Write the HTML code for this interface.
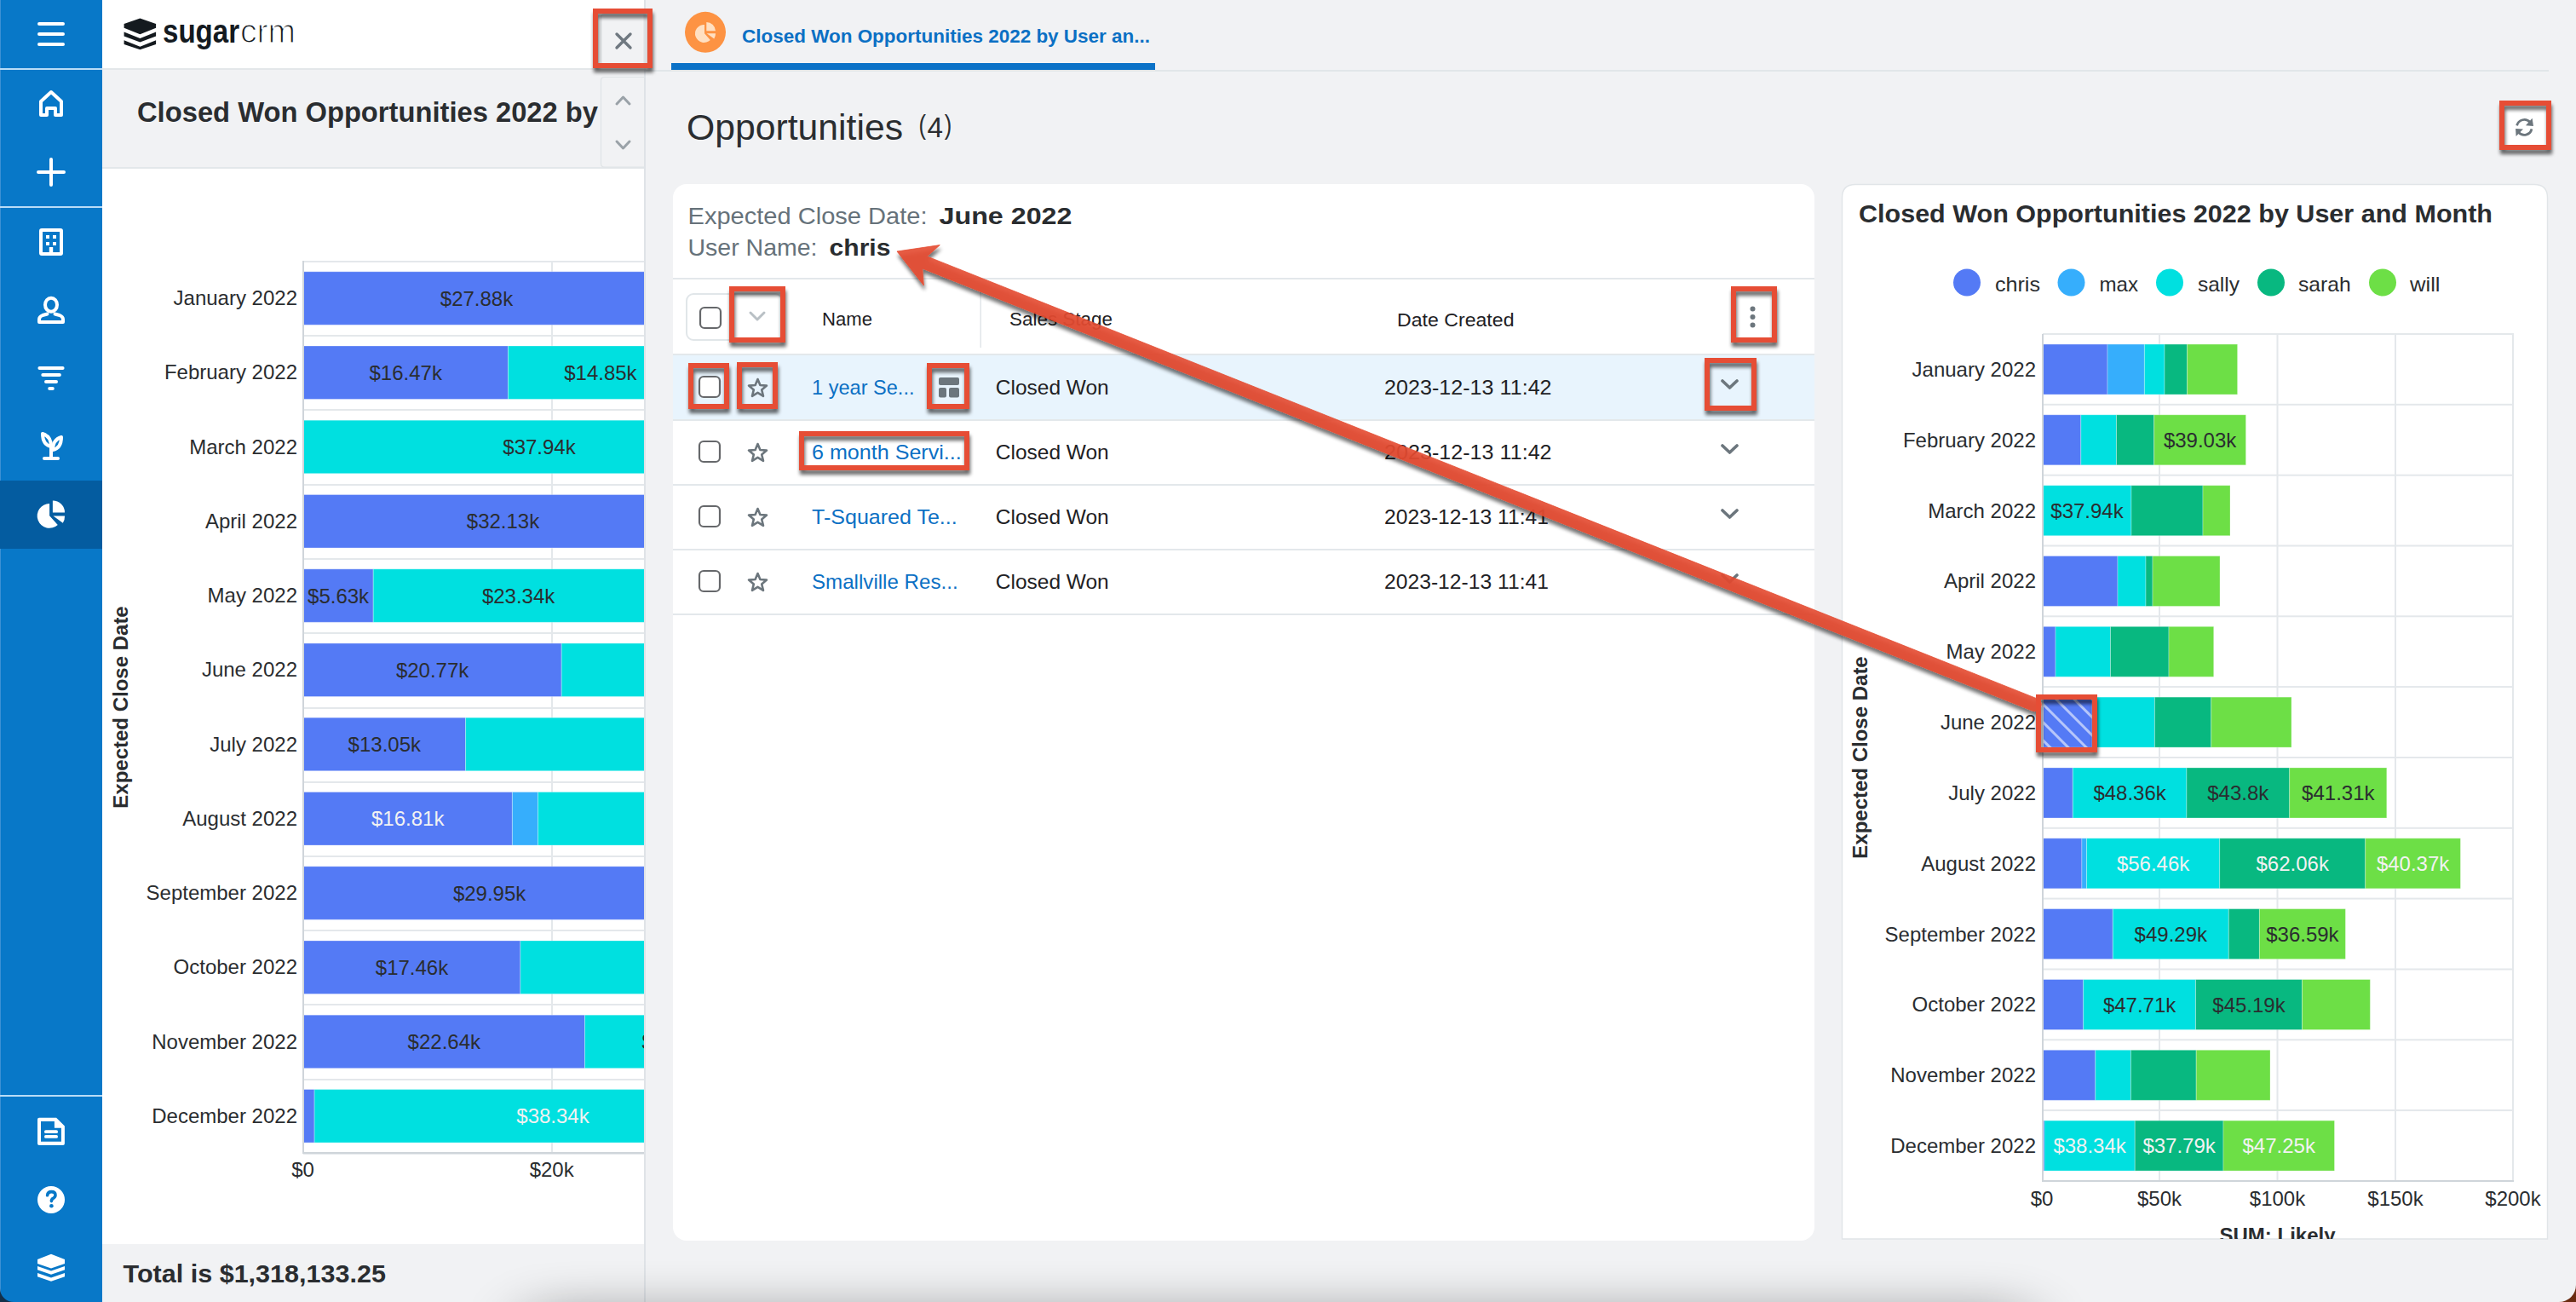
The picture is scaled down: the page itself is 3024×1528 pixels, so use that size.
<!DOCTYPE html>
<html><head><meta charset="utf-8"><title>SugarCRM</title>
<style>html,body{margin:0;padding:0;width:3024px;height:1528px;overflow:hidden;background:#f1f2f4;font-family:"Liberation Sans", sans-serif;}svg{display:block}</style>
</head><body>
<svg width="3024" height="1528" viewBox="0 0 3024 1528" font-family='"Liberation Sans", sans-serif'><rect x="0" y="0" width="3024" height="1528" fill="#f1f2f4" />
<rect x="120" y="0" width="636" height="80" fill="#ffffff" />
<rect x="120" y="80" width="636" height="2" fill="#e3e7ea" />
<rect x="120" y="82" width="636" height="114" fill="#f1f2f4" />
<rect x="120" y="196" width="636" height="2" fill="#e3e7ea" />
<rect x="120" y="198" width="636" height="1262" fill="#ffffff" />
<rect x="120" y="1460" width="636" height="68" fill="#f1f2f4" />
<rect x="756" y="0" width="2" height="1528" fill="#dfe3e7" />
<path d="M756 90.5 H709.5 Q705.5 90.5 705.5 94.5 V192 Q705.5 196 709.5 196 H756" fill="none" stroke="#dfe3e6" stroke-width="1.2"/>
<path d="M756 16.5 H709.5 Q705.5 16.5 705.5 20.5 V72 Q705.5 76 709.5 76 H756 Z" fill="#f1f2f4" stroke="#dfe3e6" stroke-width="1.2"/>
<text x="161" y="143" font-size="34" fill="#2a2d30" font-weight="bold" text-anchor="start" textLength="541" lengthAdjust="spacingAndGlyphs" >Closed Won Opportunities 2022 by</text>
<path d="M724 122 L731.5 114 L739 122" fill="none" stroke="#9aa2a8" stroke-width="3" stroke-linecap="round" stroke-linejoin="round"/>
<path d="M724 166 L731.5 174 L739 166" fill="none" stroke="#9aa2a8" stroke-width="3" stroke-linecap="round" stroke-linejoin="round"/>
<path d="M724 40 L740 56 M740 40 L724 56" stroke="#6f7880" stroke-width="3.4" stroke-linecap="round"/>
<g fill="#141a1f"><path d="M164.4 21.5 L183.1 28.1 V32.75 L164.4 40.25 L145.6 32.75 V28.1 Z"/><path d="M145.6 37.5 L164.4 45 L183.1 37.5 V42.5 L164.4 49.5 L145.6 42.5 Z"/><path d="M145.6 47.25 L164.4 54.75 L183.1 47.25 V52 L164.4 58.25 L145.6 52 Z"/></g>
<text x="191" y="50" font-size="38" fill="#141a1f" font-weight="bold" text-anchor="start" textLength="90" lengthAdjust="spacingAndGlyphs" >sugar</text>
<text x="282" y="50" font-size="38" fill="#141a1f" font-weight="normal" text-anchor="start" textLength="65" lengthAdjust="spacingAndGlyphs" stroke="#fff" stroke-width="1.2">crm</text>
<text x="144.5" y="1504.5" font-size="30" fill="#2a2d30" font-weight="bold" text-anchor="start" textLength="308.5" lengthAdjust="spacingAndGlyphs" >Total is $1,318,133.25</text>
<defs><clipPath id="lclip"><rect x="120" y="198" width="636" height="1262"/></clipPath><clipPath id="rclip"><rect x="2162" y="216" width="829" height="1238"/></clipPath><pattern id="hatch" patternUnits="userSpaceOnUse" width="15" height="15" patternTransform="rotate(-45)"><rect width="15" height="15" fill="#547af5"/><rect x="0" y="0" width="3" height="15" fill="#d6defc" opacity="0.75"/></pattern><filter id="ds" x="-20%" y="-20%" width="140%" height="150%"><feGaussianBlur in="SourceAlpha" stdDeviation="2"/><feOffset dx="1" dy="4.5" result="o"/><feComponentTransfer><feFuncA type="linear" slope="0.6"/></feComponentTransfer><feMerge><feMergeNode/><feMergeNode in="SourceGraphic"/></feMerge></filter></defs>
<g clip-path="url(#lclip)">
<rect x="356" y="306" width="400" height="2" fill="#e4e8eb" />
<rect x="356" y="393" width="400" height="2" fill="#e4e8eb" />
<rect x="356" y="480" width="400" height="2" fill="#e4e8eb" />
<rect x="356" y="568" width="400" height="2" fill="#e4e8eb" />
<rect x="356" y="655" width="400" height="2" fill="#e4e8eb" />
<rect x="356" y="742" width="400" height="2" fill="#e4e8eb" />
<rect x="356" y="830" width="400" height="2" fill="#e4e8eb" />
<rect x="356" y="917" width="400" height="2" fill="#e4e8eb" />
<rect x="356" y="1004" width="400" height="2" fill="#e4e8eb" />
<rect x="356" y="1091" width="400" height="2" fill="#e4e8eb" />
<rect x="356" y="1178" width="400" height="2" fill="#e4e8eb" />
<rect x="356" y="1266" width="400" height="2" fill="#e4e8eb" />
<rect x="356" y="1353" width="400" height="2" fill="#e4e8eb" />
<rect x="647" y="306" width="2" height="1047" fill="#e4e8eb" />
<rect x="356" y="318.8" width="407.0" height="62.5" fill="#547af5" stroke="#ffffff" stroke-opacity="0.3" stroke-width="1"/>
<text x="559.5" y="358.5" font-size="24" fill="#2a2d30" font-weight="normal" text-anchor="middle" >$27.88k</text>
<text x="349" y="358.1" font-size="24" fill="#2a2d30" font-weight="normal" text-anchor="end" >January 2022</text>
<rect x="356" y="406.0" width="240.5" height="62.5" fill="#547af5" stroke="#ffffff" stroke-opacity="0.3" stroke-width="1"/>
<text x="476.2" y="445.8" font-size="24" fill="#2a2d30" font-weight="normal" text-anchor="middle" >$16.47k</text>
<rect x="596.5" y="406.0" width="216.8" height="62.5" fill="#00e0e0" stroke="#ffffff" stroke-opacity="0.3" stroke-width="1"/>
<text x="704.9" y="445.8" font-size="24" fill="#2a2d30" font-weight="normal" text-anchor="middle" >$14.85k</text>
<text x="349" y="445.4" font-size="24" fill="#2a2d30" font-weight="normal" text-anchor="end" >February 2022</text>
<rect x="356" y="493.2" width="553.9" height="62.5" fill="#00e0e0" stroke="#ffffff" stroke-opacity="0.3" stroke-width="1"/>
<text x="633.0" y="533.0" font-size="24" fill="#2a2d30" font-weight="normal" text-anchor="middle" >$37.94k</text>
<text x="349" y="532.6" font-size="24" fill="#2a2d30" font-weight="normal" text-anchor="end" >March 2022</text>
<rect x="356" y="580.5" width="469.1" height="62.5" fill="#547af5" stroke="#ffffff" stroke-opacity="0.3" stroke-width="1"/>
<text x="590.5" y="620.2" font-size="24" fill="#2a2d30" font-weight="normal" text-anchor="middle" >$32.13k</text>
<text x="349" y="619.9" font-size="24" fill="#2a2d30" font-weight="normal" text-anchor="end" >April 2022</text>
<rect x="356" y="667.8" width="82.2" height="62.5" fill="#547af5" stroke="#ffffff" stroke-opacity="0.3" stroke-width="1"/>
<text x="397.1" y="707.5" font-size="24" fill="#2a2d30" font-weight="normal" text-anchor="middle" >$5.63k</text>
<rect x="438.2" y="667.8" width="340.8" height="62.5" fill="#00e0e0" stroke="#ffffff" stroke-opacity="0.3" stroke-width="1"/>
<text x="608.6" y="707.5" font-size="24" fill="#2a2d30" font-weight="normal" text-anchor="middle" >$23.34k</text>
<text x="349" y="707.1" font-size="24" fill="#2a2d30" font-weight="normal" text-anchor="end" >May 2022</text>
<rect x="356" y="755.0" width="303.2" height="62.5" fill="#547af5" stroke="#ffffff" stroke-opacity="0.3" stroke-width="1"/>
<text x="507.6" y="794.8" font-size="24" fill="#2a2d30" font-weight="normal" text-anchor="middle" >$20.77k</text>
<rect x="659.2" y="755.0" width="438.0" height="62.5" fill="#00e0e0" stroke="#ffffff" stroke-opacity="0.3" stroke-width="1"/>
<text x="349" y="794.4" font-size="24" fill="#2a2d30" font-weight="normal" text-anchor="end" >June 2022</text>
<rect x="356" y="842.2" width="190.5" height="62.5" fill="#547af5" stroke="#ffffff" stroke-opacity="0.3" stroke-width="1"/>
<text x="451.3" y="882.0" font-size="24" fill="#2a2d30" font-weight="normal" text-anchor="middle" >$13.05k</text>
<rect x="546.5" y="842.2" width="438.0" height="62.5" fill="#00e0e0" stroke="#ffffff" stroke-opacity="0.3" stroke-width="1"/>
<text x="349" y="881.6" font-size="24" fill="#2a2d30" font-weight="normal" text-anchor="end" >July 2022</text>
<rect x="356" y="929.5" width="245.4" height="62.5" fill="#547af5" stroke="#ffffff" stroke-opacity="0.3" stroke-width="1"/>
<text x="478.7" y="969.2" font-size="24" fill="#f2f2f2" font-weight="normal" text-anchor="middle" >$16.81k</text>
<rect x="601.4" y="929.5" width="30.1" height="62.5" fill="#36aefc" stroke="#ffffff" stroke-opacity="0.3" stroke-width="1"/>
<rect x="631.5" y="929.5" width="438.0" height="62.5" fill="#00e0e0" stroke="#ffffff" stroke-opacity="0.3" stroke-width="1"/>
<text x="349" y="968.9" font-size="24" fill="#2a2d30" font-weight="normal" text-anchor="end" >August 2022</text>
<rect x="356" y="1016.8" width="437.3" height="62.5" fill="#547af5" stroke="#ffffff" stroke-opacity="0.3" stroke-width="1"/>
<text x="574.6" y="1056.5" font-size="24" fill="#2a2d30" font-weight="normal" text-anchor="middle" >$29.95k</text>
<text x="349" y="1056.1" font-size="24" fill="#2a2d30" font-weight="normal" text-anchor="end" >September 2022</text>
<rect x="356" y="1104.0" width="254.9" height="62.5" fill="#547af5" stroke="#ffffff" stroke-opacity="0.3" stroke-width="1"/>
<text x="483.5" y="1143.8" font-size="24" fill="#2a2d30" font-weight="normal" text-anchor="middle" >$17.46k</text>
<rect x="610.9" y="1104.0" width="438.0" height="62.5" fill="#00e0e0" stroke="#ffffff" stroke-opacity="0.3" stroke-width="1"/>
<text x="349" y="1143.4" font-size="24" fill="#2a2d30" font-weight="normal" text-anchor="end" >October 2022</text>
<rect x="356" y="1191.2" width="330.5" height="62.5" fill="#547af5" stroke="#ffffff" stroke-opacity="0.3" stroke-width="1"/>
<text x="521.3" y="1231.0" font-size="24" fill="#2a2d30" font-weight="normal" text-anchor="middle" >$22.64k</text>
<rect x="686.5" y="1191.2" width="219.6" height="62.5" fill="#00e0e0" stroke="#ffffff" stroke-opacity="0.3" stroke-width="1"/>
<text x="796.3" y="1231.0" font-size="24" fill="#2a2d30" font-weight="normal" text-anchor="middle" >$15.04k</text>
<text x="349" y="1230.6" font-size="24" fill="#2a2d30" font-weight="normal" text-anchor="end" >November 2022</text>
<rect x="356" y="1278.5" width="13.1" height="62.5" fill="#547af5" stroke="#ffffff" stroke-opacity="0.3" stroke-width="1"/>
<rect x="369.1" y="1278.5" width="559.8" height="62.5" fill="#00e0e0" stroke="#ffffff" stroke-opacity="0.3" stroke-width="1"/>
<text x="649.0" y="1318.2" font-size="24" fill="#f2f2f2" font-weight="normal" text-anchor="middle" >$38.34k</text>
<text x="349" y="1317.9" font-size="24" fill="#2a2d30" font-weight="normal" text-anchor="end" >December 2022</text>
</g>
<rect x="355" y="306" width="2" height="1048" fill="#cfd5da" />
<rect x="355" y="1352" width="401" height="2" fill="#cfd5da" />
<text x="355.5" y="1381" font-size="24" fill="#2a2d30" font-weight="normal" text-anchor="middle" >$0</text>
<text x="647.7" y="1381" font-size="24" fill="#2a2d30" font-weight="normal" text-anchor="middle" >$20k</text>
<text x="0" y="0" font-size="24" fill="#2a2d30" font-weight="bold" text-anchor="middle" transform="translate(150 830) rotate(-90)">Expected Close Date</text>
<rect x="0" y="0" width="120" height="1528" fill="#0878c8" />
<rect x="0" y="0" width="1" height="1528" fill="#3d90d4" />
<rect x="0" y="80" width="120" height="2" fill="#b9dcf7" />
<rect x="0" y="242" width="120" height="2" fill="#b9dcf7" />
<rect x="0" y="1285" width="120" height="2" fill="#b9dcf7" />
<rect x="0" y="564" width="120" height="80" fill="#045ca0" />
<g stroke="#fff" stroke-width="4" stroke-linecap="round"><path d="M46 28 H74 M46 40 H74 M46 52 H74"/></g>
<path d="M48 135 V119 L60 108 L72 119 V135 H65 V127 H55 V135 Z" fill="none" stroke="#fff" stroke-width="4" stroke-linejoin="round"/>
<path d="M60 187 V217 M45 202 H75" stroke="#fff" stroke-width="4" stroke-linecap="round"/>
<g fill="#fff"><path d="M49 268 H71 Q74 268 74 271 V297 Q74 300 71 300 H49 Q46 300 46 297 V271 Q46 268 49 268 Z M50 272 V296 H57.8 V290 H62.2 V296 H70 V272 Z" fill-rule="evenodd"/><rect x="54" y="276" width="4" height="4"/><rect x="62" y="276" width="4" height="4"/><rect x="54" y="284" width="4" height="4"/><rect x="62" y="284" width="4" height="4"/></g>
<g fill="none" stroke="#fff" stroke-width="4" stroke-linecap="round" stroke-linejoin="round"><ellipse cx="60" cy="357.7" rx="7" ry="8"/><path d="M55.5 368.5 L50 370 Q46 371.5 46 375 V378 H74 V375 Q74 371.5 70 370 L64.5 368.5"/></g>
<g stroke="#fff" stroke-width="4" stroke-linecap="round"><path d="M46.4 432 H73.6 M50.3 440 H69.9 M54 448 H66 M58.2 456 H61.8"/></g>
<g fill="none" stroke="#fff" stroke-width="4" stroke-linecap="round" stroke-linejoin="round"><path d="M60 538 V524"/><path d="M52 538 H68"/><path d="M50 509 Q50 522 60 524 Q60 512 50 509 Z"/><path d="M72 513 Q72 526 62 528 Q62 516 72 513 Z"/></g>
<g fill="#fff"><path d="M58.1 591 V605.3 L67.8 616 A14.4 14.4 0 1 1 58.1 591 Z"/><path d="M61.9 587.5 V601.5 H76 A14.1 14.1 0 0 0 61.9 587.5 Z"/><path d="M62.5 605.6 H76 A13.5 13.5 0 0 1 73.8 613.8 Z"/></g>
<g fill="#fff"><path d="M46 1311.8 H66.1 L75.9 1321.6 V1342 Q75.9 1344 73.9 1344 H46 Q44 1344 44 1342 V1313.8 Q44 1311.8 46 1311.8 Z M48 1316.1 V1339.8 H71.9 V1323.8 H63.9 V1316.1 Z" fill-rule="evenodd"/><rect x="52" y="1326.3" width="16" height="3.7" rx="1.85"/><rect x="52" y="1332.1" width="16" height="3.7" rx="1.85"/></g>
<circle cx="60" cy="1408" r="16" fill="#fff"/><path d="M55.6 1402.8 Q56 1398.6 60.4 1398.6 Q65 1398.6 65 1402.6 Q65 1405 62.4 1406.4 Q60.4 1407.4 60.4 1409.6" fill="none" stroke="#0878c8" stroke-width="3.6" stroke-linecap="round" stroke-linejoin="round"/><circle cx="60.4" cy="1415.2" r="2.3" fill="#0878c8"/>
<g fill="#fff"><path d="M60 1471.8 L76 1478 V1482.9 L60 1488.4 L44 1482.9 V1478 Z"/><path d="M44 1486 L60 1491.5 L76 1486 V1490.2 L60 1495.8 L44 1490.2 Z"/><path d="M44 1494 L60 1499.5 L76 1494 V1498.2 L60 1503.7 L44 1498.2 Z"/></g>
<path d="M0 1512 V1528 H16 A16 16 0 0 1 0 1512 Z" fill="#13304a"/>
<rect x="758" y="82" width="2234" height="2" fill="#e1e6e9" />
<circle cx="828" cy="37.85" r="24" fill="#fd9343"/>
<g fill="#ffe0c2"><path d="M827 28.9 V39.25 L833.8 46.9 A10.5 10.5 0 1 1 827 28.9 Z"/><path d="M829.3 25.9 V36.2 H840 A10.7 10.7 0 0 0 829.3 25.9 Z"/><path d="M829.7 39.3 H840 A10.5 10.5 0 0 1 838.3 45.4 Z"/></g>
<text x="871" y="50" font-size="22" fill="#0b70c4" font-weight="bold" text-anchor="start" textLength="479" lengthAdjust="spacingAndGlyphs" >Closed Won Opportunities 2022 by User an...</text>
<rect x="788" y="74" width="568" height="8" fill="#0b72c7" />
<text x="806" y="163.8" font-size="42" fill="#2a2d30" font-weight="normal" text-anchor="start" textLength="254" lengthAdjust="spacingAndGlyphs" >Opportunities</text>
<text x="1078.5" y="157.3" font-size="31" fill="#2a2d30" font-weight="normal" text-anchor="start" textLength="8.5" lengthAdjust="spacingAndGlyphs" >(</text>
<text x="1088.5" y="161.2" font-size="33" fill="#2a2d30" font-weight="normal" text-anchor="start" textLength="18.5" lengthAdjust="spacingAndGlyphs" >4</text>
<text x="1108.8" y="157.3" font-size="31" fill="#2a2d30" font-weight="normal" text-anchor="start" textLength="8.5" lengthAdjust="spacingAndGlyphs" >)</text>
<rect x="2940" y="124" width="50" height="46" fill="#ffffff" />
<g fill="none" stroke="#6c767d" stroke-width="2.8"><path d="M2954.6 147.4 A8.9 8.9 0 0 1 2970.1 143.7"/><path d="M2972 151.4 A8.9 8.9 0 0 1 2956.5 155.1"/></g>
<g fill="#6c767d"><path d="M2972.6 138.8 L2974 148 L2965 147.3 Z"/><path d="M2953.1 151 L2962 151.5 L2953.6 160 Z"/></g>
<rect x="790" y="216" width="1340" height="1240" rx="16" fill="#ffffff"/>
<text x="807.5" y="262.5" font-size="28" fill="#66727a" font-weight="normal" text-anchor="start" textLength="281" lengthAdjust="spacingAndGlyphs" >Expected Close Date:</text>
<text x="1102.5" y="262.5" font-size="28" fill="#2a2d30" font-weight="bold" text-anchor="start" textLength="156" lengthAdjust="spacingAndGlyphs" >June 2022</text>
<text x="807.5" y="300" font-size="28" fill="#66727a" font-weight="normal" text-anchor="start" textLength="152" lengthAdjust="spacingAndGlyphs" >User Name:</text>
<text x="973.5" y="300" font-size="28" fill="#2a2d30" font-weight="bold" text-anchor="start" textLength="72" lengthAdjust="spacingAndGlyphs" >chris</text>
<rect x="790" y="326" width="1340" height="2" fill="#e3e8eb" />
<rect x="806" y="345" width="112" height="54" rx="8" fill="#fff" stroke="#e1e6e9" stroke-width="2"/>
<rect x="822" y="361" width="24" height="24" rx="5" fill="#fff" stroke="#66686b" stroke-width="2.2"/>
<path d="M881 367 L889 375 L897 367" fill="none" stroke="#b9c0c5" stroke-width="3" stroke-linecap="round" stroke-linejoin="round"/>
<text x="965" y="381.5" font-size="22" fill="#1e2124" font-weight="normal" text-anchor="start" textLength="59" lengthAdjust="spacingAndGlyphs" >Name</text>
<rect x="1150.5" y="341" width="1.5" height="67" fill="#e1e6e9" />
<text x="1185" y="381.5" font-size="22" fill="#1e2124" font-weight="normal" text-anchor="start" textLength="121" lengthAdjust="spacingAndGlyphs" >Sales Stage</text>
<text x="1640" y="382.5" font-size="22" fill="#1e2124" font-weight="normal" text-anchor="start" textLength="137.5" lengthAdjust="spacingAndGlyphs" >Date Created</text>
<g fill="#6c767d"><circle cx="2057.5" cy="362.5" r="3"/><circle cx="2057.5" cy="372" r="3"/><circle cx="2057.5" cy="381.5" r="3"/></g>
<rect x="790" y="415" width="1340" height="2" fill="#e3e8eb" />
<rect x="790" y="417" width="1340" height="76" fill="#e8f4fd" />
<rect x="821" y="442" width="24" height="24" rx="5" fill="#fff" stroke="#66686b" stroke-width="2.2"/>
<polygon points="889.5,445.0 892.4,452.0 900.0,452.6 894.2,457.5 896.0,464.9 889.5,460.9 883.0,464.9 884.8,457.5 879.0,452.6 886.6,452.0" fill="none" stroke="#6c767d" stroke-width="2.6" stroke-linejoin="round"/>
<text x="953" y="463" font-size="24" fill="#0b70c4" font-weight="normal" text-anchor="start" textLength="120.5" lengthAdjust="spacingAndGlyphs" >1 year Se...</text>
<text x="1168.75" y="463" font-size="24" fill="#1e2124" font-weight="normal" text-anchor="start" textLength="133" lengthAdjust="spacingAndGlyphs" >Closed Won</text>
<text x="1625" y="463" font-size="24" fill="#1e2124" font-weight="normal" text-anchor="start" textLength="196.6" lengthAdjust="spacingAndGlyphs" >2023-12-13 11:42</text>
<path d="M2022 447 L2030.5 455 L2039 447" fill="none" stroke="#6c767d" stroke-width="3.6" stroke-linecap="round" stroke-linejoin="round"/>
<rect x="790" y="492" width="1340" height="2" fill="#e3e8eb" />
<rect x="821" y="518" width="24" height="24" rx="5" fill="#fff" stroke="#66686b" stroke-width="2.2"/>
<polygon points="889.5,521.0 892.4,528.0 900.0,528.6 894.2,533.5 896.0,540.9 889.5,536.9 883.0,540.9 884.8,533.5 879.0,528.6 886.6,528.0" fill="none" stroke="#6c767d" stroke-width="2.6" stroke-linejoin="round"/>
<text x="953" y="539" font-size="24" fill="#0b70c4" font-weight="normal" text-anchor="start" textLength="175.75" lengthAdjust="spacingAndGlyphs" >6 month Servi...</text>
<text x="1168.75" y="539" font-size="24" fill="#1e2124" font-weight="normal" text-anchor="start" textLength="133" lengthAdjust="spacingAndGlyphs" >Closed Won</text>
<text x="1625" y="539" font-size="24" fill="#1e2124" font-weight="normal" text-anchor="start" textLength="196.6" lengthAdjust="spacingAndGlyphs" >2023-12-13 11:42</text>
<path d="M2022 523 L2030.5 531 L2039 523" fill="none" stroke="#6c767d" stroke-width="3.6" stroke-linecap="round" stroke-linejoin="round"/>
<rect x="790" y="568" width="1340" height="2" fill="#e3e8eb" />
<rect x="821" y="594" width="24" height="24" rx="5" fill="#fff" stroke="#66686b" stroke-width="2.2"/>
<polygon points="889.5,597.0 892.4,604.0 900.0,604.6 894.2,609.5 896.0,616.9 889.5,612.9 883.0,616.9 884.8,609.5 879.0,604.6 886.6,604.0" fill="none" stroke="#6c767d" stroke-width="2.6" stroke-linejoin="round"/>
<text x="953" y="615" font-size="24" fill="#0b70c4" font-weight="normal" text-anchor="start" textLength="170.75" lengthAdjust="spacingAndGlyphs" >T-Squared Te...</text>
<text x="1168.75" y="615" font-size="24" fill="#1e2124" font-weight="normal" text-anchor="start" textLength="133" lengthAdjust="spacingAndGlyphs" >Closed Won</text>
<text x="1625" y="615" font-size="24" fill="#1e2124" font-weight="normal" text-anchor="start" textLength="193" lengthAdjust="spacingAndGlyphs" >2023-12-13 11:41</text>
<path d="M2022 599 L2030.5 607 L2039 599" fill="none" stroke="#6c767d" stroke-width="3.6" stroke-linecap="round" stroke-linejoin="round"/>
<rect x="790" y="644" width="1340" height="2" fill="#e3e8eb" />
<rect x="821" y="670" width="24" height="24" rx="5" fill="#fff" stroke="#66686b" stroke-width="2.2"/>
<polygon points="889.5,673.0 892.4,680.0 900.0,680.6 894.2,685.5 896.0,692.9 889.5,688.9 883.0,692.9 884.8,685.5 879.0,680.6 886.6,680.0" fill="none" stroke="#6c767d" stroke-width="2.6" stroke-linejoin="round"/>
<text x="953" y="691" font-size="24" fill="#0b70c4" font-weight="normal" text-anchor="start" textLength="171.6" lengthAdjust="spacingAndGlyphs" >Smallville Res...</text>
<text x="1168.75" y="691" font-size="24" fill="#1e2124" font-weight="normal" text-anchor="start" textLength="133" lengthAdjust="spacingAndGlyphs" >Closed Won</text>
<text x="1625" y="691" font-size="24" fill="#1e2124" font-weight="normal" text-anchor="start" textLength="193" lengthAdjust="spacingAndGlyphs" >2023-12-13 11:41</text>
<path d="M2022 675 L2030.5 683 L2039 675" fill="none" stroke="#6c767d" stroke-width="3.6" stroke-linecap="round" stroke-linejoin="round"/>
<rect x="790" y="720" width="1340" height="2" fill="#e3e8eb" />
<g fill="#6c767d"><rect x="1102" y="443" width="24" height="9" rx="2"/><rect x="1102" y="455" width="9" height="11.5" rx="2"/><rect x="1114" y="455" width="12" height="11.5" rx="2"/></g>
<path d="M2162.5 1454 V232 Q2162.5 216.5 2178 216.5 H2975 Q2990.5 216.5 2990.5 232 V1454 Z" fill="#ffffff" stroke="#e1e5e8" stroke-width="1.4"/>
<text x="2182" y="261" font-size="30" fill="#2a2d30" font-weight="bold" text-anchor="start" textLength="744" lengthAdjust="spacingAndGlyphs" >Closed Won Opportunities 2022 by User and Month</text>
<circle cx="2309" cy="331.5" r="16" fill="#547af5"/>
<text x="2342" y="342" font-size="24" fill="#2a2d30" font-weight="normal" text-anchor="start" textLength="53" lengthAdjust="spacingAndGlyphs" >chris</text>
<circle cx="2431.5" cy="331.5" r="16" fill="#36aefc"/>
<text x="2464.5" y="342" font-size="24" fill="#2a2d30" font-weight="normal" text-anchor="start" textLength="45.5" lengthAdjust="spacingAndGlyphs" >max</text>
<circle cx="2547" cy="331.5" r="16" fill="#00e0e0"/>
<text x="2580" y="342" font-size="24" fill="#2a2d30" font-weight="normal" text-anchor="start" textLength="49" lengthAdjust="spacingAndGlyphs" >sally</text>
<circle cx="2666" cy="331.5" r="16" fill="#08b880"/>
<text x="2698" y="342" font-size="24" fill="#2a2d30" font-weight="normal" text-anchor="start" textLength="61.7" lengthAdjust="spacingAndGlyphs" >sarah</text>
<circle cx="2797" cy="331.5" r="16" fill="#6ddf46"/>
<text x="2829" y="342" font-size="24" fill="#2a2d30" font-weight="normal" text-anchor="start" textLength="35.5" lengthAdjust="spacingAndGlyphs" >will</text>
<rect x="2398" y="391.0" width="553" height="2" fill="#e4e8eb" />
<rect x="2398" y="473.8" width="553" height="2" fill="#e4e8eb" />
<rect x="2398" y="556.7" width="553" height="2" fill="#e4e8eb" />
<rect x="2398" y="639.5" width="553" height="2" fill="#e4e8eb" />
<rect x="2398" y="722.3" width="553" height="2" fill="#e4e8eb" />
<rect x="2398" y="805.1" width="553" height="2" fill="#e4e8eb" />
<rect x="2398" y="888.0" width="553" height="2" fill="#e4e8eb" />
<rect x="2398" y="970.8" width="553" height="2" fill="#e4e8eb" />
<rect x="2398" y="1053.6" width="553" height="2" fill="#e4e8eb" />
<rect x="2398" y="1136.5" width="553" height="2" fill="#e4e8eb" />
<rect x="2398" y="1219.3" width="553" height="2" fill="#e4e8eb" />
<rect x="2398" y="1302.1" width="553" height="2" fill="#e4e8eb" />
<rect x="2398" y="1385.0" width="553" height="2" fill="#e4e8eb" />
<rect x="2534" y="392" width="2" height="994" fill="#e4e8eb" />
<rect x="2672.5" y="392" width="2" height="994" fill="#e4e8eb" />
<rect x="2811" y="392" width="2" height="994" fill="#e4e8eb" />
<rect x="2949" y="392" width="2" height="994" fill="#e4e8eb" />
<rect x="2398" y="404.0" width="76" height="59" fill="#547af5" stroke="#ffffff" stroke-opacity="0.3" stroke-width="1"/>
<rect x="2474" y="404.0" width="43.4" height="59" fill="#36aefc" stroke="#ffffff" stroke-opacity="0.3" stroke-width="1"/>
<rect x="2517.4" y="404.0" width="23.6" height="59" fill="#00e0e0" stroke="#ffffff" stroke-opacity="0.3" stroke-width="1"/>
<rect x="2541" y="404.0" width="26.6" height="59" fill="#08b880" stroke="#ffffff" stroke-opacity="0.3" stroke-width="1"/>
<rect x="2567.6" y="404.0" width="59.0" height="59" fill="#6ddf46" stroke="#ffffff" stroke-opacity="0.3" stroke-width="1"/>
<text x="2390" y="441.9" font-size="24" fill="#2a2d30" font-weight="normal" text-anchor="end" >January 2022</text>
<rect x="2398" y="486.8" width="44.8" height="59" fill="#547af5" stroke="#ffffff" stroke-opacity="0.3" stroke-width="1"/>
<rect x="2442.8" y="486.8" width="41.7" height="59" fill="#00e0e0" stroke="#ffffff" stroke-opacity="0.3" stroke-width="1"/>
<rect x="2484.5" y="486.8" width="44.2" height="59" fill="#08b880" stroke="#ffffff" stroke-opacity="0.3" stroke-width="1"/>
<rect x="2528.7" y="486.8" width="107.8" height="59" fill="#6ddf46" stroke="#ffffff" stroke-opacity="0.3" stroke-width="1"/>
<text x="2582.6" y="524.8" font-size="24" fill="#2a2d30" font-weight="normal" text-anchor="middle" >$39.03k</text>
<text x="2390" y="524.7" font-size="24" fill="#2a2d30" font-weight="normal" text-anchor="end" >February 2022</text>
<rect x="2398" y="569.7" width="104" height="59" fill="#00e0e0" stroke="#ffffff" stroke-opacity="0.3" stroke-width="1"/>
<text x="2450.0" y="607.7" font-size="24" fill="#2a2d30" font-weight="normal" text-anchor="middle" >$37.94k</text>
<rect x="2502" y="569.7" width="84" height="59" fill="#08b880" stroke="#ffffff" stroke-opacity="0.3" stroke-width="1"/>
<rect x="2586" y="569.7" width="32" height="59" fill="#6ddf46" stroke="#ffffff" stroke-opacity="0.3" stroke-width="1"/>
<text x="2390" y="607.6" font-size="24" fill="#2a2d30" font-weight="normal" text-anchor="end" >March 2022</text>
<rect x="2398" y="652.5" width="88" height="59" fill="#547af5" stroke="#ffffff" stroke-opacity="0.3" stroke-width="1"/>
<rect x="2486" y="652.5" width="33" height="59" fill="#00e0e0" stroke="#ffffff" stroke-opacity="0.3" stroke-width="1"/>
<rect x="2519" y="652.5" width="8" height="59" fill="#08b880" stroke="#ffffff" stroke-opacity="0.3" stroke-width="1"/>
<rect x="2527" y="652.5" width="79" height="59" fill="#6ddf46" stroke="#ffffff" stroke-opacity="0.3" stroke-width="1"/>
<text x="2390" y="690.4" font-size="24" fill="#2a2d30" font-weight="normal" text-anchor="end" >April 2022</text>
<rect x="2398" y="735.3" width="15" height="59" fill="#547af5" stroke="#ffffff" stroke-opacity="0.3" stroke-width="1"/>
<rect x="2413" y="735.3" width="64.5" height="59" fill="#00e0e0" stroke="#ffffff" stroke-opacity="0.3" stroke-width="1"/>
<rect x="2477.5" y="735.3" width="68.5" height="59" fill="#08b880" stroke="#ffffff" stroke-opacity="0.3" stroke-width="1"/>
<rect x="2546" y="735.3" width="52.7" height="59" fill="#6ddf46" stroke="#ffffff" stroke-opacity="0.3" stroke-width="1"/>
<text x="2390" y="773.2" font-size="24" fill="#2a2d30" font-weight="normal" text-anchor="end" >May 2022</text>
<rect x="2398" y="818.1" width="58" height="59" fill="url(#hatch)" stroke="#ffffff" stroke-opacity="0.3" stroke-width="1"/>
<rect x="2456" y="818.1" width="73.4" height="59" fill="#00e0e0" stroke="#ffffff" stroke-opacity="0.3" stroke-width="1"/>
<rect x="2529.4" y="818.1" width="66.4" height="59" fill="#08b880" stroke="#ffffff" stroke-opacity="0.3" stroke-width="1"/>
<rect x="2595.8" y="818.1" width="94.2" height="59" fill="#6ddf46" stroke="#ffffff" stroke-opacity="0.3" stroke-width="1"/>
<text x="2390" y="856.1" font-size="24" fill="#2a2d30" font-weight="normal" text-anchor="end" >June 2022</text>
<rect x="2398" y="901.0" width="35.3" height="59" fill="#547af5" stroke="#ffffff" stroke-opacity="0.3" stroke-width="1"/>
<rect x="2433.3" y="901.0" width="133.6" height="59" fill="#00e0e0" stroke="#ffffff" stroke-opacity="0.3" stroke-width="1"/>
<text x="2500.1" y="939.0" font-size="24" fill="#2a2d30" font-weight="normal" text-anchor="middle" >$48.36k</text>
<rect x="2566.9" y="901.0" width="120.8" height="59" fill="#08b880" stroke="#ffffff" stroke-opacity="0.3" stroke-width="1"/>
<text x="2627.3" y="939.0" font-size="24" fill="#2a2d30" font-weight="normal" text-anchor="middle" >$43.8k</text>
<rect x="2687.7" y="901.0" width="114.1" height="59" fill="#6ddf46" stroke="#ffffff" stroke-opacity="0.3" stroke-width="1"/>
<text x="2744.8" y="939.0" font-size="24" fill="#2a2d30" font-weight="normal" text-anchor="middle" >$41.31k</text>
<text x="2390" y="938.9" font-size="24" fill="#2a2d30" font-weight="normal" text-anchor="end" >July 2022</text>
<rect x="2398" y="983.8" width="45.9" height="59" fill="#547af5" stroke="#ffffff" stroke-opacity="0.3" stroke-width="1"/>
<rect x="2443.9" y="983.8" width="5.6" height="59" fill="#36aefc" stroke="#ffffff" stroke-opacity="0.3" stroke-width="1"/>
<rect x="2449.5" y="983.8" width="156.2" height="59" fill="#00e0e0" stroke="#ffffff" stroke-opacity="0.3" stroke-width="1"/>
<text x="2527.6" y="1021.8" font-size="24" fill="#f2f2f2" font-weight="normal" text-anchor="middle" >$56.46k</text>
<rect x="2605.7" y="983.8" width="171.0" height="59" fill="#08b880" stroke="#ffffff" stroke-opacity="0.3" stroke-width="1"/>
<text x="2691.2" y="1021.8" font-size="24" fill="#f2f2f2" font-weight="normal" text-anchor="middle" >$62.06k</text>
<rect x="2776.7" y="983.8" width="111.7" height="59" fill="#6ddf46" stroke="#ffffff" stroke-opacity="0.3" stroke-width="1"/>
<text x="2832.6" y="1021.8" font-size="24" fill="#f2f2f2" font-weight="normal" text-anchor="middle" >$40.37k</text>
<text x="2390" y="1021.7" font-size="24" fill="#2a2d30" font-weight="normal" text-anchor="end" >August 2022</text>
<rect x="2398" y="1066.6" width="82.3" height="59" fill="#547af5" stroke="#ffffff" stroke-opacity="0.3" stroke-width="1"/>
<rect x="2480.3" y="1066.6" width="136.0" height="59" fill="#00e0e0" stroke="#ffffff" stroke-opacity="0.3" stroke-width="1"/>
<text x="2548.3" y="1104.6" font-size="24" fill="#2a2d30" font-weight="normal" text-anchor="middle" >$49.29k</text>
<rect x="2616.3" y="1066.6" width="36.1" height="59" fill="#08b880" stroke="#ffffff" stroke-opacity="0.3" stroke-width="1"/>
<rect x="2652.4" y="1066.6" width="101.0" height="59" fill="#6ddf46" stroke="#ffffff" stroke-opacity="0.3" stroke-width="1"/>
<text x="2702.9" y="1104.6" font-size="24" fill="#2a2d30" font-weight="normal" text-anchor="middle" >$36.59k</text>
<text x="2390" y="1104.6" font-size="24" fill="#2a2d30" font-weight="normal" text-anchor="end" >September 2022</text>
<rect x="2398" y="1149.5" width="47.7" height="59" fill="#547af5" stroke="#ffffff" stroke-opacity="0.3" stroke-width="1"/>
<rect x="2445.7" y="1149.5" width="131.8" height="59" fill="#00e0e0" stroke="#ffffff" stroke-opacity="0.3" stroke-width="1"/>
<text x="2511.6" y="1187.5" font-size="24" fill="#2a2d30" font-weight="normal" text-anchor="middle" >$47.71k</text>
<rect x="2577.5" y="1149.5" width="125.0" height="59" fill="#08b880" stroke="#ffffff" stroke-opacity="0.3" stroke-width="1"/>
<text x="2640.0" y="1187.5" font-size="24" fill="#2a2d30" font-weight="normal" text-anchor="middle" >$45.19k</text>
<rect x="2702.5" y="1149.5" width="79.9" height="59" fill="#6ddf46" stroke="#ffffff" stroke-opacity="0.3" stroke-width="1"/>
<text x="2390" y="1187.4" font-size="24" fill="#2a2d30" font-weight="normal" text-anchor="end" >October 2022</text>
<rect x="2398" y="1232.3" width="61.8" height="59" fill="#547af5" stroke="#ffffff" stroke-opacity="0.3" stroke-width="1"/>
<rect x="2459.8" y="1232.3" width="41.6" height="59" fill="#00e0e0" stroke="#ffffff" stroke-opacity="0.3" stroke-width="1"/>
<rect x="2501.4" y="1232.3" width="76.8" height="59" fill="#08b880" stroke="#ffffff" stroke-opacity="0.3" stroke-width="1"/>
<rect x="2578.2" y="1232.3" width="86.8" height="59" fill="#6ddf46" stroke="#ffffff" stroke-opacity="0.3" stroke-width="1"/>
<text x="2390" y="1270.2" font-size="24" fill="#2a2d30" font-weight="normal" text-anchor="end" >November 2022</text>
<rect x="2398" y="1315.1" width="2" height="59" fill="#547af5" stroke="#ffffff" stroke-opacity="0.3" stroke-width="1"/>
<rect x="2400" y="1315.1" width="106.2" height="59" fill="#00e0e0" stroke="#ffffff" stroke-opacity="0.3" stroke-width="1"/>
<text x="2453.1" y="1353.1" font-size="24" fill="#f2f2f2" font-weight="normal" text-anchor="middle" >$38.34k</text>
<rect x="2506.2" y="1315.1" width="103.8" height="59" fill="#08b880" stroke="#ffffff" stroke-opacity="0.3" stroke-width="1"/>
<text x="2558.1" y="1353.1" font-size="24" fill="#f2f2f2" font-weight="normal" text-anchor="middle" >$37.79k</text>
<rect x="2610" y="1315.1" width="130.5" height="59" fill="#6ddf46" stroke="#ffffff" stroke-opacity="0.3" stroke-width="1"/>
<text x="2675.2" y="1353.1" font-size="24" fill="#f2f2f2" font-weight="normal" text-anchor="middle" >$47.25k</text>
<text x="2390" y="1353.0" font-size="24" fill="#2a2d30" font-weight="normal" text-anchor="end" >December 2022</text>
<rect x="2397" y="392" width="2" height="995" fill="#cfd5da" />
<rect x="2397" y="1385" width="554" height="2" fill="#cfd5da" />
<text x="2397" y="1414.5" font-size="24" fill="#2a2d30" font-weight="normal" text-anchor="middle" >$0</text>
<text x="2535" y="1414.5" font-size="24" fill="#2a2d30" font-weight="normal" text-anchor="middle" >$50k</text>
<text x="2673.5" y="1414.5" font-size="24" fill="#2a2d30" font-weight="normal" text-anchor="middle" >$100k</text>
<text x="2812" y="1414.5" font-size="24" fill="#2a2d30" font-weight="normal" text-anchor="middle" >$150k</text>
<text x="2950" y="1414.5" font-size="24" fill="#2a2d30" font-weight="normal" text-anchor="middle" >$200k</text>
<g clip-path="url(#rclip)">
<text x="2673.5" y="1457.5" font-size="24" fill="#2a2d30" font-weight="bold" text-anchor="middle" >SUM: Likely</text>
</g>
<text x="0" y="0" font-size="24" fill="#2a2d30" font-weight="bold" text-anchor="middle" transform="translate(2192 889) rotate(-90)">Expected Close Date</text>
<g filter="url(#ds)"><path d="M1053.0,295.0 L1103.3,287.6 L1088.3,300.9 L2391.3,819.9 A7.6 7.6 0 0 1 2385.7,834.1 L1082.7,315.0 L1084.4,335.0 Z" fill="#e44b31" stroke="#e44b31" stroke-width="0.8" stroke-linejoin="round" fill-opacity="0.9"/><rect x="699.0" y="13.0" width="64" height="64" fill="none" stroke="#e64d36" stroke-width="6"/><rect x="859.0" y="339.0" width="60" height="60" fill="none" stroke="#e64d36" stroke-width="6"/><rect x="811.0" y="429.0" width="42" height="48" fill="none" stroke="#e64d36" stroke-width="6"/><rect x="868.0" y="428.0" width="42" height="49" fill="none" stroke="#e64d36" stroke-width="6"/><rect x="1091.0" y="429.0" width="44" height="48" fill="none" stroke="#e64d36" stroke-width="6"/><rect x="941.0" y="509.0" width="194" height="40" fill="none" stroke="#e64d36" stroke-width="6"/><rect x="2035.0" y="339.0" width="48" height="60" fill="none" stroke="#e64d36" stroke-width="6"/><rect x="2004.0" y="423.0" width="55" height="56" fill="none" stroke="#e64d36" stroke-width="6"/><rect x="2937.0" y="121.0" width="55" height="52" fill="none" stroke="#e64d36" stroke-width="6"/><rect x="2393.0" y="818.0" width="66" height="62" fill="none" stroke="#e64d36" stroke-width="6"/></g>
<defs><linearGradient id="bsh" x1="0" y1="0" x2="0" y2="1"><stop offset="0" stop-color="#000" stop-opacity="0"/><stop offset="1" stop-color="#000" stop-opacity="0.12"/></linearGradient><radialGradient id="bsh2" cx="0.5" cy="1" r="0.5"><stop offset="0" stop-color="#000" stop-opacity="0.12"/><stop offset="1" stop-color="#000" stop-opacity="0"/></radialGradient></defs>
<defs><filter id="blur40" x="-50%" y="-300%" width="200%" height="700%"><feGaussianBlur stdDeviation="38 26"/></filter></defs>
<rect x="620" y="1532" width="1760" height="60" fill="#000" opacity="0.3" filter="url(#blur40)"/>
<path d="M3024 1508 V1528 H3004 A20 20 0 0 0 3024 1508 Z" fill="#6a2a10"/></svg>
</body></html>
